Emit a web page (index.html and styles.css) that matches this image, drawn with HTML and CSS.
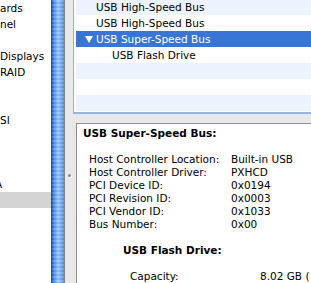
FILE: index.html
```html
<!DOCTYPE html>
<html lang="en">
<head>
    <meta charset="UTF-8">
    <title>System Profiler - USB</title>
    <link rel="stylesheet" href="styles.css">
</head>
<body>
    <div class="window">
        <nav class="sidebar">
            <div class="side-row">ards</div>
            <div class="side-row">nel</div>
            <div class="side-row"></div>
            <div class="side-row">Displays</div>
            <div class="side-row">RAID</div>
            <div class="side-row"></div>
            <div class="side-row"></div>
            <div class="side-row">SI</div>
            <div class="side-row"></div>
            <div class="side-row"></div>
            <div class="side-row"></div>
            <div class="side-row"><span class="clipped">A</span></div>
            <div class="side-row selected"></div>
            <div class="side-row"></div>
            <div class="side-row"></div>
        </nav>
        <div class="scroller"></div>
        <div class="split"><span class="dimple"></span></div>

        <main class="content">
            <div class="tree">
                <div class="tree-rows">
                    <div class="tree-row level-1">USB High-Speed Bus</div>
                    <div class="tree-row level-1">USB High-Speed Bus</div>
                    <div class="tree-row level-1 active">
                        <svg class="disclosure" width="8" height="7" viewBox="0 0 8 7"><polygon points="0,0 8,0 4,7" fill="#fff"/></svg>USB Super-Speed Bus
                    </div>
                    <div class="tree-row level-2">USB Flash Drive</div>
                    <div class="tree-row"></div>
                    <div class="tree-row"></div>
                    <div class="tree-row"></div>
                </div>
            </div>

            <section class="detail">
                <h2 class="detail-title">USB Super-Speed Bus:</h2>
                <dl class="props">
                    <dt>Host Controller Location:</dt><dd>Built-in USB</dd>
                    <dt>Host Controller Driver:</dt><dd>PXHCD</dd>
                    <dt>PCI Device ID:</dt><dd>0x0194</dd>
                    <dt>PCI Revision ID:</dt><dd>0x0003</dd>
                    <dt>PCI Vendor ID:</dt><dd>0x1033</dd>
                    <dt>Bus Number:</dt><dd>0x00</dd>
                </dl>

                <div class="device">
                    <h3 class="device-title">USB Flash Drive:</h3>
                    <dl class="props device-props">
                        <dt>Capacity:</dt><dd>8.02 GB (</dd>
                    </dl>
                </div>
            </section>
        </main>
    </div>
</body>
</html>
```

FILE: styles.css
```css
* {
    margin: 0;
    padding: 0;
    box-sizing: border-box;
}

body {
    font-family: 'DejaVu Sans', Verdana, sans-serif;
    font-size: 10.5px;
    color: #000;
    background: #e8e8e8;
    overflow: hidden;
}

.window {
    display: flex;
    width: 311px;
    height: 283px;
    overflow: hidden;
}

/* source list, scrolled so only the tails of the names show */
.sidebar {
    width: 51px;
    flex-shrink: 0;
    background: #fff;
    overflow: hidden;
    white-space: nowrap;
}

.side-row {
    height: 16px;
    line-height: 16px;
}

.side-row.selected {
    background: #d4d4d4;
}

.clipped {
    display: inline-block;
    margin-left: -5px;
}

.scroller {
    width: 14px;
    flex-shrink: 0;
    border-right: 1px solid #858585;
    background:
        repeating-linear-gradient(to bottom, rgba(255,255,255,0.12) 0, rgba(255,255,255,0.12) 2px, rgba(0,40,120,0.06) 2px, rgba(0,40,120,0.06) 4px),
        linear-gradient(to right, #1449b8 0, #1449b8 1px, #3f7fe0 2px, #6eaaf3 5px, #9cc9fb 7px, #78b0f5 10px, #4f8ce6 13px);
}

.split {
    width: 8px;
    flex-shrink: 0;
    background: #e8e8e8;
    padding-top: 174px;
    display: flex;
    flex-direction: column;
    align-items: center;
}

.dimple {
    width: 3px;
    height: 3px;
    border-radius: 50%;
    background: #8a8a8a;
    box-shadow: 1px 1px 0 #fff;
}

.content {
    flex: 1;
    display: flex;
    flex-direction: column;
    min-width: 0;
}

/* device tree */
.tree {
    height: 114px;
    flex-shrink: 0;
    background: #fff;
    border-left: 1px solid #9cb1d8;
    border-bottom: 2px solid #9bb4de;
    padding-left: 2px;
    overflow: hidden;
    white-space: nowrap;
}

.tree-rows {
    margin-top: -1px;
}

.tree-row {
    height: 16px;
    line-height: 16px;
    display: flex;
    align-items: center;
}

.tree-row:nth-child(odd) {
    background: #edf3fe;
}

.tree-row.level-1 {
    padding-left: 20px;
}

.tree-row.level-2 {
    padding-left: 36px;
}

.tree-row.active {
    background: #3875d7;
    color: #fff;
    padding-left: 9px;
}

.disclosure {
    margin-right: 3px;
}

/* detail pane */
.detail {
    flex: 1;
    margin: 9px 0 0 3px;
    background: #fff;
    border-top: 1px solid #8e8e8e;
    border-left: 1px solid #8e8e8e;
    padding: 3px 0 0 6px;
    line-height: 13px;
    white-space: nowrap;
    overflow: hidden;
}

.detail-title,
.device-title {
    font-size: 10.5px;
    font-weight: bold;
    margin-bottom: 13px;
}

.props {
    display: grid;
    grid-template-columns: 142px auto;
    padding-left: 6px;
}

.props dd {
    margin: 0;
}

.device {
    margin-top: 13px;
    padding-left: 40px;
}

.device-props {
    grid-template-columns: 130px auto;
    padding-left: 7px;
}
```
